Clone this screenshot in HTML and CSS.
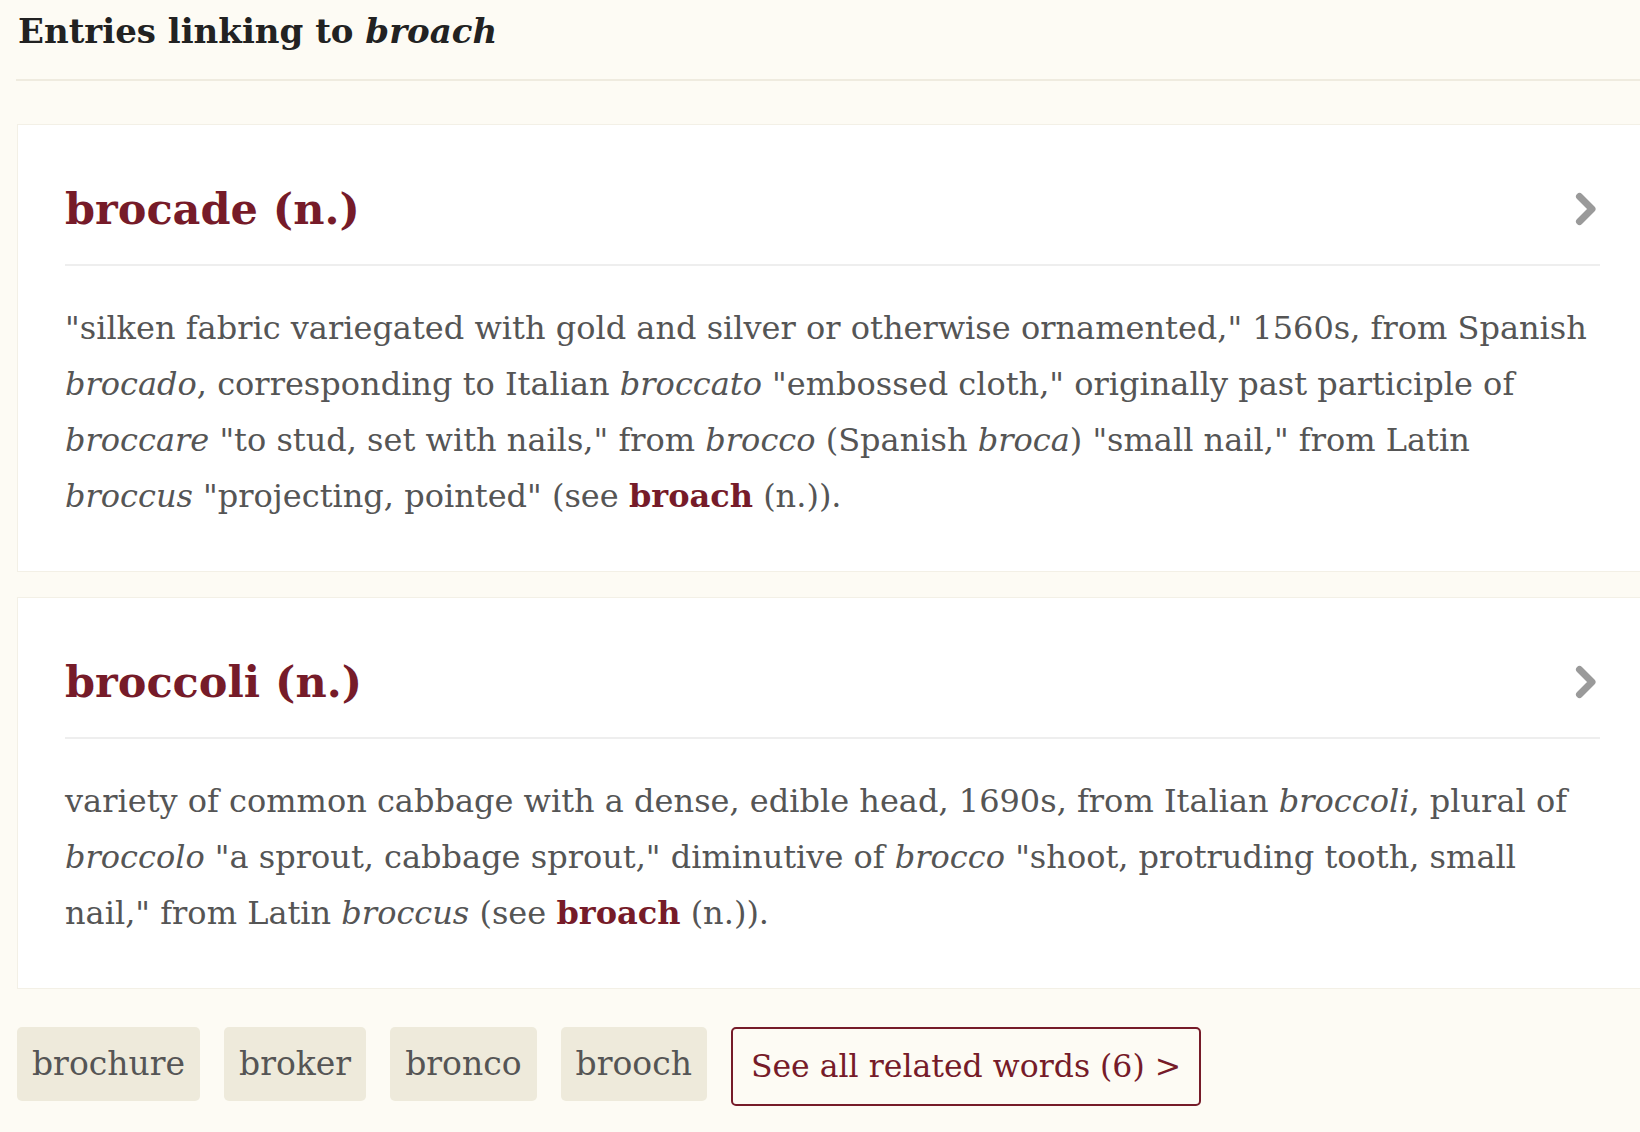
FILE: index.html
```html
<!DOCTYPE html>
<html lang="en">
<head>
    <meta charset="UTF-8">
    <title>Entries linking to broach</title>
    <link rel="stylesheet" href="styles.css">
</head>
<body>

<div class="page">
    <h2 class="section-title">Entries linking to <em>broach</em></h2>

    <div class="entries">
        <div class="entry">
            <a class="entry-head" href="#">
                <span class="entry-word">brocade (n.)</span>
                <svg class="chevron" viewBox="0 0 22 34" width="22" height="34"><path d="M4.5 4.5 L17 17 L4.5 29.5"/></svg>
            </a>
            <p class="entry-text">"silken fabric variegated with gold and silver or otherwise ornamented," 1560s, from Spanish<br>
                <i>brocado</i>, corresponding to Italian <i>broccato</i> "embossed cloth," originally past participle of<br>
                <i>broccare</i> "to stud, set with nails," from <i>brocco</i> (Spanish <i>broca</i>) "small nail," from Latin<br>
                <i>broccus</i> "projecting, pointed" (see <a class="crossref" href="#">broach</a> (n.)).</p>
        </div>

        <div class="entry">
            <a class="entry-head" href="#">
                <span class="entry-word">broccoli (n.)</span>
                <svg class="chevron" viewBox="0 0 22 34" width="22" height="34"><path d="M4.5 4.5 L17 17 L4.5 29.5"/></svg>
            </a>
            <p class="entry-text">variety of common cabbage with a dense, edible head, 1690s, from Italian <i>broccoli</i>, plural of<br>
                <i>broccolo</i> "a sprout, cabbage sprout," diminutive of <i>brocco</i> "shoot, protruding tooth, small<br>
                nail," from Latin <i>broccus</i> (see <a class="crossref" href="#">broach</a> (n.)).</p>
        </div>
    </div>

    <div class="related">
        <a class="tag" href="#">brochure</a>
        <a class="tag" href="#">broker</a>
        <a class="tag" href="#">bronco</a>
        <a class="tag" href="#">brooch</a>
        <a class="see-all" href="#">See all related words (6) &gt;</a>
    </div>
</div>

</body>
</html>
```

FILE: styles.css
```css
body {
    margin: 0;
    background-color: #fdfbf4;
    font-family: "DejaVu Serif", Georgia, serif;
    overflow: hidden;
}
a {
    text-decoration: none;
}
.page {
    width: 1632px;
    padding-left: 16px;
}
.section-title {
    margin: 0;
    padding: 10px 0 27px 2px;
    line-height: 42px;
    font-size: 34px;
    font-weight: bold;
    color: #222;
    border-bottom: 2px solid #efebdf;
}
.entries {
    margin-top: 43px;
    margin-left: 1px;
}
.entry {
    background: #fff;
    border: 1px solid #f3f0e6;
    padding: 0 47px;
    margin-bottom: 25px;
}
.entry-head {
    display: flex;
    justify-content: space-between;
    align-items: center;
    padding: 60px 3px 31px 0;
    border-bottom: 2px solid #eeeeee;
}
.entry-word {
    font-size: 43px;
    line-height: 48px;
    font-weight: bold;
    color: #761b29;
}
.chevron path {
    fill: none;
    stroke: #9a9a9a;
    stroke-width: 7;
    stroke-linecap: round;
    stroke-linejoin: round;
}
.entry-text {
    margin: 34px 0 0;
    padding-bottom: 47px;
    font-size: 32px;
    line-height: 56px;
    color: #555;
}
.crossref {
    font-weight: bold;
    color: #761b29;
}
.related {
    display: flex;
    align-items: flex-start;
    gap: 24px;
    margin-top: 38px;
    margin-left: 1px;
}
.tag {
    padding: 15px 15px;
    line-height: 44px;
    font-size: 33px;
    color: #555;
    background: #eeeadb;
    border-radius: 5px;
}
.see-all {
    padding: 16px 18px;
    line-height: 43px;
    font-size: 31.5px;
    color: #761b29;
    border: 2px solid #761b29;
    border-radius: 5px;
}
```
